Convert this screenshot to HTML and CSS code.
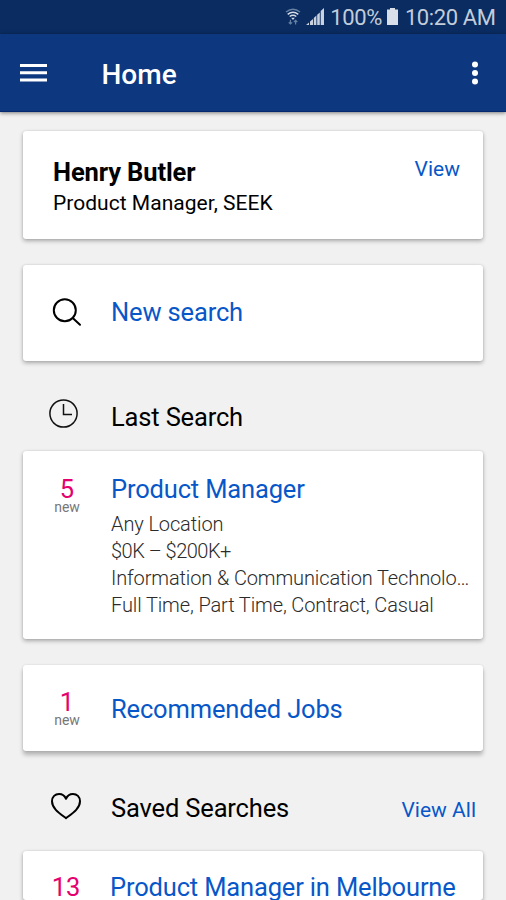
FILE: index.html
```html
<!DOCTYPE html>
<html lang="en">
<head>
<meta charset="utf-8">
<title>Home</title>
<link rel="stylesheet" href="styles.css">
</head>
<body>
<div class="status">
  <svg class="wifi" width="16" height="18" viewBox="0 0 16 18" fill="none" stroke-width="1.5">
    <path d="M1 4Q8-1.5 15 4" stroke="#6580a3"/>
    <path d="M2.7 6.4Q8 2.2 13.3 6.4M4.7 8.5Q8 6 11.3 8.5" stroke="#d5dce6"/>
    <path d="M6.2 9.800h3.600L8 12z" fill="#d5dce6"/>
    <path d="M5.400 11.800v4M3.700 14.300l1.700 1.700 1.700-1.700M10.600 16.600v-4M8.900 14l1.700-1.700 1.700 1.700" stroke="#6580a3" stroke-width="1.2"/>
  </svg>
  <svg class="signal" width="18" height="17" viewBox="0 0 18 17" fill="#c9d2de">
    <path d="M0 17l3-2.6V17zM4 13.6l3-2.600v6H4zM7.800 10l2.600-2.400V17H7.800zM11.200 6.800l2.600-2.300V17h-2.600zM14.700 3L18 0v17h-3.300z"/>
  </svg>
  <span class="percent">100%</span>
  <svg class="battery" width="11" height="17" viewBox="0 0 11 17" fill="#d8dfe8"><path d="M3 0h5v1.500h3V17H0V1.500h3z"/></svg>
  <span class="time">10:20 AM</span>
</div>
<header class="appbar">
  <svg width="27" height="20" viewBox="0 0 27 20" fill="#fff"><path d="M0 1h27v3H0zM0 8.200h27v3H0zM0 15.500h27v3H0z"/></svg>
  <h1>Home</h1>
  <svg class="more" width="8" height="26" viewBox="0 0 8 26" fill="#fff"><circle cx="4" cy="4.500" r="3"/><circle cx="4" cy="13" r="3"/><circle cx="4" cy="21.500" r="3"/></svg>
</header>
<main>
  <section class="card profile">
    <div>
      <h2>Henry Butler</h2>
      <p>Product Manager, SEEK</p>
    </div>
    <a class="view">View</a>
  </section>

  <section class="card row search">
    <svg class="search-icon" width="30" height="30" viewBox="0 0 30 30" fill="none" stroke="#000" stroke-width="2" stroke-linecap="round"><circle cx="12.800" cy="12.300" r="11"/><path d="M20.700 20L28 26.800"/></svg>
    <a class="title new-search">New search</a>
  </section>

  <div class="row heading last">
    <svg class="clock" width="30" height="30" viewBox="0 0 30 30" fill="none" stroke="#111" stroke-width="1.500"><circle cx="14.500" cy="14.500" r="13.600"/><path d="M14.500 5v10.500h8.500"/></svg>
    <h3 class="title">Last Search</h3>
  </div>

  <section class="card row result">
    <div class="count"><b>5</b><small>new</small></div>
    <div class="info">
      <a class="title manager">Product Manager</a>
      <p>Any Location</p>
      <p class="salary">$0K – $200K+</p>
      <p>Information &amp; Communication Technolo…</p>
      <p>Full Time, Part Time, Contract, Casual</p>
    </div>
  </section>

  <section class="card row recommended">
    <div class="count"><b>1</b><small>new</small></div>
    <a class="title rec">Recommended Jobs</a>
  </section>

  <div class="row heading saved">
    <svg class="heart" width="32" height="28" viewBox="0 0 32 28" fill="none" stroke="#000" stroke-width="2" stroke-linejoin="round"><path d="M16 26.200C9.500 21.300 2 16.500 2 9.200C2 4.800 5.200 1.900 9 1.900C12.200 1.900 14.800 3.700 16 6.800C17.200 3.700 19.800 1.900 23 1.900C26.800 1.900 30 4.800 30 9.200C30 16.500 22.500 21.300 16 26.200Z"/></svg>
    <h3 class="title">Saved Searches</h3>
    <a class="view all">View All</a>
  </div>

  <section class="card row melbourne">
    <div class="count"><b>13</b></div>
    <a class="title mel">Product Manager in Melbourne</a>
  </section>
</main>
</body>
</html>
```
FILE: styles.css
```css
* { box-sizing: border-box; }
body {
  margin: 0;
  height: 900px;
  overflow: hidden;
  display: flex;
  flex-direction: column;
  background: #f1f1f1;
  color: #000;
  font-family: Roboto, "Liberation Sans", sans-serif;
}
h1, h2, h3, p { margin: 0; font-weight: 400; white-space: nowrap; }
svg { display: block; flex: none; }
.status {
  flex: none;
  height: 34px;
  display: flex;
  justify-content: flex-end;
  padding: 8px 10.5px 0 0;
  background: #0a2c61;
  color: #c3ccd9;
  font-size: 22px;
  line-height: 19px;
  white-space: nowrap;
}
.signal { margin-left: 5px; }
.percent { margin-left: 6px; letter-spacing: -.4px; }
.battery { margin: 0 7px 0 5px; }
.time { letter-spacing: -.4px; }
.appbar {
  flex: none;
  height: 78px;
  display: flex;
  align-items: center;
  padding: 0 27px 0 20px;
  background: #0d377f;
  color: #fff;
  border-bottom: 1px solid #062a70;
  box-shadow: 0 1px 4px rgba(0, 0, 0, .5);
}
.appbar h1 {
  margin-left: 54.5px;
  padding-top: 4px;
  font-size: 28px;
  line-height: 34px;
  font-weight: 500;
}
.more { margin-left: auto; }
main { flex: 1; min-height: 0; padding: 19px 23px 0; }
.card {
  background: #fff;
  border-radius: 3px;
  box-shadow: 0 2px 4px rgba(0, 0, 0, .3), 0 0 2px rgba(0, 0, 0, .12);
}
.row { display: grid; grid-template-columns: 88px 1fr auto; align-items: start; }
.title { font-size: 25.5px; line-height: 30px; letter-spacing: -.16px; white-space: nowrap; }
a { color: #0857c9; }
.profile {
  height: 108px;
  display: flex;
  justify-content: space-between;
  padding: 26px 23px 0 30px;
}
.profile h2 { font-size: 25.5px; line-height: 30px; font-weight: 700; letter-spacing: -.12px; }
.profile p { font-size: 21px; line-height: 32px; letter-spacing: .03px; }
.view { font-size: 21px; line-height: 25px; white-space: nowrap; }
.search { height: 96px; margin-top: 26px; padding-top: 32px; }
.search-icon { margin: 1px 0 0 29px; }
.heading { height: 90px; }
.last { padding-top: 41px; }
.clock { margin: -3px 0 0 26px; }
.result { height: 188px; padding-top: 23px; }
.count { display: flex; flex-direction: column; align-items: center; color: #e6006e; }
.count b { padding-top: 4px; font-size: 25.5px; line-height: 22px; font-weight: 400; }
.count small { font-size: 14px; line-height: 14px; color: #777; }
.info p { font-size: 20px; line-height: 26.7px; font-weight: 300; letter-spacing: -.12px; color: #2b2b2b; }
.info .salary { letter-spacing: -.5px; }
.info .title { display: block; margin-bottom: 7.4px; }
.recommended {
  height: 86px;
  margin-top: 26px;
  padding-top: 22px;
  box-shadow: 0 4px 4px rgba(0, 0, 0, .25), 0 0 2px rgba(0, 0, 0, .15);
}
.rec { margin-top: 7px; }
.saved { height: 100px; padding-top: 42px; }
.heart { margin: -1px 0 0 27px; }
.view.all { margin: 5px 7px 0 0; }
.melbourne { height: 49px; padding-top: 21px; }
.melbourne .count { margin-left: -2px; }
.mel { margin: 1px 0 0 -1px; line-height: 28px; letter-spacing: -.16px; }
```
